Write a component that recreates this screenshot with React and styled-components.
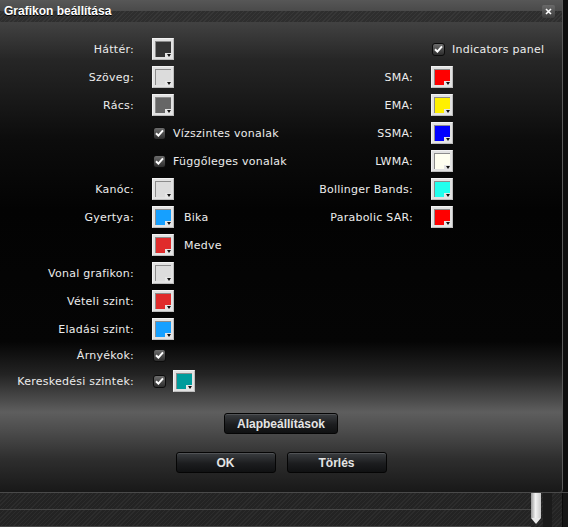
import React from 'react';
import styled, { createGlobalStyle } from 'styled-components';

const GlobalStyle = createGlobalStyle`
  html, body {
    margin: 0;
    padding: 0;
    background: #141414;
  }
`;

const stripes = `repeating-linear-gradient(135deg, rgba(255,255,255,0.045) 0 1px, transparent 1px 3px)`;

const Screen = styled.div`
  width: 568px;
  height: 527px;
  overflow: hidden;
  display: flex;
  flex-direction: column;
  font-family: "DejaVu Sans", Verdana, sans-serif;
  font-size: 11px;
  letter-spacing: 0.25px;
  color: #ececec;
  background: ${stripes}, #232323;
`;

const TopRow = styled.div`
  display: flex;
  height: 492px;
`;

const Dialog = styled.div`
  width: 562px;
  display: flex;
  flex-direction: column;
  border-right: 1px solid #5a5a5a;
  border-bottom-right-radius: 4px;
  overflow: hidden;
`;

const SideStrip = styled.div`
  flex: 1;
  background: #0e0e0e;
`;

const TitleBar = styled.div`
  height: 22px;
  display: flex;
  align-items: center;
  justify-content: space-between;
  padding: 0 7px 0 4px;
  background:
    linear-gradient(#575757 0, #4a4a4a 50%, transparent 50%),
    ${stripes},
    #2e2e2e;
`;

const Title = styled.span`
  font-family: "Liberation Sans", Arial, sans-serif;
  font-weight: bold;
  font-size: 12px;
  letter-spacing: 0;
  color: #fff;
  text-shadow: 0 1px 0 #000;
`;

const CloseButton = styled.div`
  width: 13px;
  height: 13px;
  border-radius: 2px;
  background: linear-gradient(#6a6a6a, #3c3c3c);
  display: flex;
  align-items: center;
  justify-content: center;
`;

const Body = styled.div`
  flex: 1;
  padding-top: 13px;
  display: flex;
  flex-direction: column;
  background: linear-gradient(
    #424242 0%,
    #262626 8%,
    #0c0c0c 25%,
    #030303 40%,
    #050505 68%,
    #232323 75%,
    #5e5e5e 83%,
    #4c4c4c 87%,
    #2e2e2e 93%,
    #181818 100%
  );
`;

const Columns = styled.div`
  display: flex;
`;

const Column = styled.div`
  width: ${p => p.$width}px;
  display: grid;
  grid-template-columns: ${p => p.$labelWidth}px auto;
  column-gap: 18px;
  align-content: start;
`;

const Label = styled.div`
  height: ${p => p.$h || 28}px;
  display: flex;
  align-items: center;
  justify-content: flex-end;
  white-space: nowrap;
`;

const Cell = styled.div`
  height: ${p => p.$h || 28}px;
  display: flex;
  align-items: center;
  gap: ${p => p.$gap || 7}px;
  white-space: nowrap;
`;

const SwatchFrame = styled.div`
  position: relative;
  width: 22px;
  height: 22px;
  box-sizing: border-box;
  padding: 2px;
  background: #e2e2e2;
  border: 1px solid #f2f2f2;
  border-right-color: #bdbdbd;
  border-bottom-color: #bdbdbd;
`;

const SwatchFill = styled.div`
  width: 100%;
  height: 100%;
  box-sizing: border-box;
  border-top: 1px solid #8c8c8c;
  border-left: 1px solid #8c8c8c;
  background: ${p => p.$color};
`;

const DropMarker = styled.div`
  position: absolute;
  right: 1px;
  bottom: 1px;
  width: 7px;
  height: 5px;
  background: #e6e6e6;
  display: flex;
  align-items: center;
  justify-content: center;
  &::after {
    content: '';
    border-left: 2px solid transparent;
    border-right: 2px solid transparent;
    border-top: 3px solid #111;
  }
`;

const Box = styled.div`
  width: 13px;
  height: 13px;
  box-sizing: border-box;
  margin-left: 1px;
  border: 1px solid #0c0c0c;
  border-radius: 3px;
  background: linear-gradient(#6c6c6c, #2c2c2c);
  display: flex;
  align-items: center;
  justify-content: center;
`;

const ButtonRow = styled.div`
  display: flex;
  justify-content: center;
  gap: 11px;
  margin-top: ${p => p.$top}px;
`;

const Button = styled.div`
  width: ${p => p.$w}px;
  height: 21px;
  box-sizing: border-box;
  border: 1px solid #050505;
  border-radius: 3px;
  background: linear-gradient(#3a3d40, #1c1d1f 55%, #101112);
  box-shadow: inset 0 1px 0 rgba(255,255,255,0.12);
  display: flex;
  align-items: center;
  justify-content: center;
  font-family: "Liberation Sans", Arial, sans-serif;
  font-weight: bold;
  font-size: 12px;
  letter-spacing: 0;
  color: #e4e4e4;
`;

const BottomBar = styled.div`
  flex: 1;
  display: flex;
  border-top: 1px solid #4a4a4a;
`;

const BottomLines = styled.div`
  flex: 1;
  display: flex;
  flex-direction: column;
`;

const BottomBand = styled.div`
  height: 16px;
  border-bottom: 1px solid #474747;
`;

const Thumb = styled.div`
  width: 10px;
  margin-right: 2px;
  display: flex;
  flex-direction: column;
  align-items: center;
`;

const ThumbBody = styled.div`
  width: 10px;
  height: 25px;
  background: linear-gradient(90deg, #9a9a9a, #f2f2f2 45%, #c8c8c8);
`;

const ThumbArrow = styled.div`
  border-left: 5px solid transparent;
  border-right: 5px solid transparent;
  border-top: 6px solid #e8e8e8;
`;

const Rail = styled.div`
  width: 9px;
  background: #1b1b1b;
  margin-right: 10px;
`;

const Edge = styled.div`
  width: 5px;
  border-left: 1px solid #0a0a0a;
  background: #161616;
`;

const Check = () => (
  <Box>
    <svg width="9" height="8" viewBox="0 0 9 8">
      <path d="M1 4.2 L3.4 6.6 L8 1.4" stroke="#fff" strokeWidth="2" fill="none" />
    </svg>
  </Box>
);

const Swatch = ({ color }) => (
  <SwatchFrame>
    <SwatchFill $color={color} />
    <DropMarker />
  </SwatchFrame>
);

const App = () => (
  <>
    <GlobalStyle />
    <Screen>
      <TopRow>
        <Dialog>
          <TitleBar>
            <Title>Grafikon beállítása</Title>
            <CloseButton>
              <svg width="7" height="7" viewBox="0 0 7 7">
                <path d="M1 1 L6 6 M6 1 L1 6" stroke="#fff" strokeWidth="1.6" />
              </svg>
            </CloseButton>
          </TitleBar>
          <Body>
            <Columns>
              <Column $width={290} $labelWidth={134}>
                <Label>Háttér:</Label>
                <Cell><Swatch color="#353535" /></Cell>
                <Label>Szöveg:</Label>
                <Cell><Swatch color="#dcdcdc" /></Cell>
                <Label>Rács:</Label>
                <Cell><Swatch color="#666666" /></Cell>
                <Label />
                <Cell><Check />Vízszintes vonalak</Cell>
                <Label />
                <Cell><Check />Függőleges vonalak</Cell>
                <Label>Kanóc:</Label>
                <Cell><Swatch color="#dcdcdc" /></Cell>
                <Label>Gyertya:</Label>
                <Cell $gap={10}><Swatch color="#16a0ff" />Bika</Cell>
                <Label />
                <Cell $gap={10}><Swatch color="#e02c2c" />Medve</Cell>
                <Label>Vonal grafikon:</Label>
                <Cell><Swatch color="#dcdcdc" /></Cell>
                <Label>Vételi szint:</Label>
                <Cell><Swatch color="#e02c2c" /></Cell>
                <Label>Eladási szint:</Label>
                <Cell><Swatch color="#16a0ff" /></Cell>
                <Label $h={24}>Árnyékok:</Label>
                <Cell $h={24}><Check /></Cell>
                <Label>Kereskedési szintek:</Label>
                <Cell $gap={7}><Check /><Swatch color="#009c9c" /></Cell>
              </Column>
              <Column $width={272} $labelWidth={123}>
                <Label />
                <Cell><Check />Indicators panel</Cell>
                <Label>SMA:</Label>
                <Cell><Swatch color="#ff0000" /></Cell>
                <Label>EMA:</Label>
                <Cell><Swatch color="#fff000" /></Cell>
                <Label>SSMA:</Label>
                <Cell><Swatch color="#0000ff" /></Cell>
                <Label>LWMA:</Label>
                <Cell><Swatch color="#fffff0" /></Cell>
                <Label>Bollinger Bands:</Label>
                <Cell><Swatch color="#22ffee" /></Cell>
                <Label>Parabolic SAR:</Label>
                <Cell><Swatch color="#ff0000" /></Cell>
              </Column>
            </Columns>
            <ButtonRow $top={18}>
              <Button $w={114}>Alapbeállítások</Button>
            </ButtonRow>
            <ButtonRow $top={18}>
              <Button $w={100}>OK</Button>
              <Button $w={100}>Törlés</Button>
            </ButtonRow>
          </Body>
        </Dialog>
        <SideStrip />
      </TopRow>
      <BottomBar>
        <BottomLines>
          <BottomBand />
          <BottomBand />
        </BottomLines>
        <Thumb>
          <ThumbBody />
          <ThumbArrow />
        </Thumb>
        <Rail />
        <Edge />
      </BottomBar>
    </Screen>
  </>
);

export default App;
